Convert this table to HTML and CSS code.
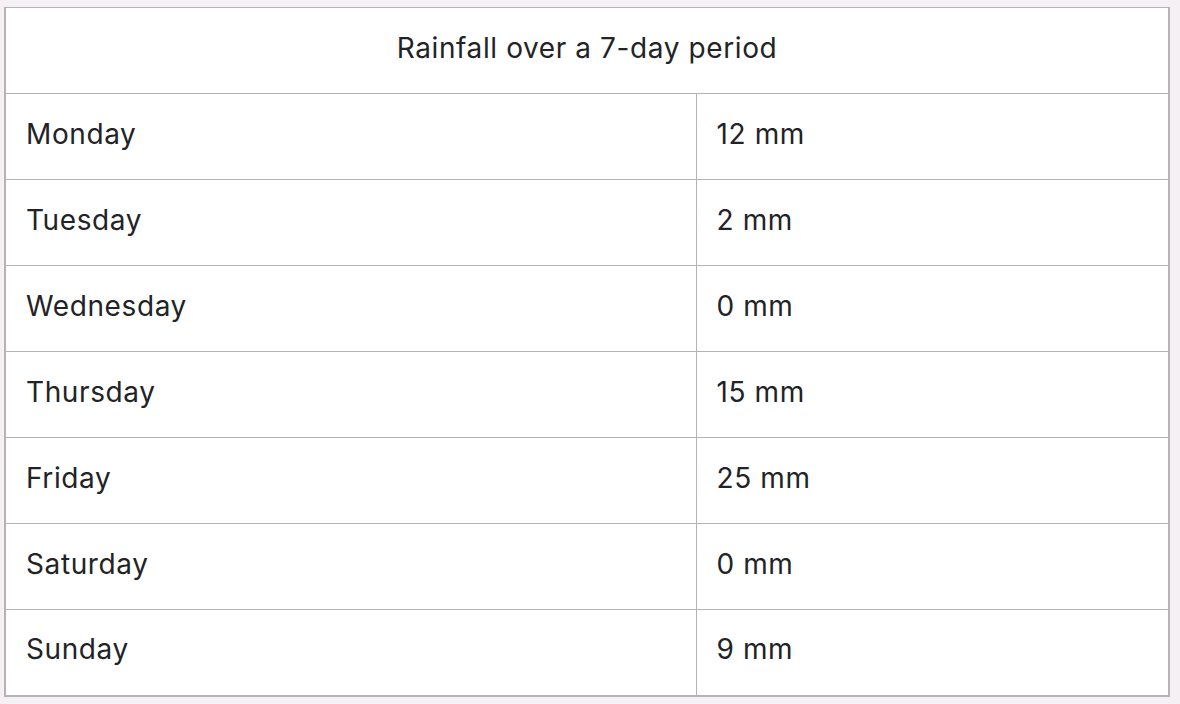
FILE: index.html
```html
<!DOCTYPE html>
<html lang="en">
<head>
<meta charset="utf-8">
<title>Rainfall</title>
<link rel="stylesheet" href="styles.css">
</head>
<body>
<table class="rain">
  <thead>
    <tr><th colspan="2" class="title">Rainfall over a 7-day period</th></tr>
  </thead>
  <tbody>
    <tr><td class="day">Monday</td><td class="amt">12 mm</td></tr>
    <tr><td class="day">Tuesday</td><td class="amt">2 mm</td></tr>
    <tr><td class="day">Wednesday</td><td class="amt">0 mm</td></tr>
    <tr><td class="day">Thursday</td><td class="amt">15 mm</td></tr>
    <tr><td class="day">Friday</td><td class="amt">25 mm</td></tr>
    <tr><td class="day">Saturday</td><td class="amt">0 mm</td></tr>
    <tr><td class="day">Sunday</td><td class="amt">9 mm</td></tr>
  </tbody>
</table>
</body>
</html>
```
FILE: styles.css
```css
html, body {
  margin: 0;
  background: #f5f0f3;
}
body {
  padding: 7px 10px 0 4px;
  font-family: Inter, "Noto Sans", sans-serif;
  color: #222326;
}
.rain {
  width: 1166px;
  border-collapse: collapse;
  background: #fff;
  border: 2px solid #b4b4b4;
  border-top: 1px solid #b4b4b4;
}
.rain th, .rain td {
  border: 1px solid #b4b4b4;
  height: 86px;
  padding: 0 20px 6px 20px;
  font-size: 28px;
  font-weight: 400;
  letter-spacing: 0.6px;
  box-sizing: border-box;
}
.title {
  text-align: center;
}
.day {
  width: 691px;
  text-align: left;
}
.amt {
  text-align: left;
}
```
